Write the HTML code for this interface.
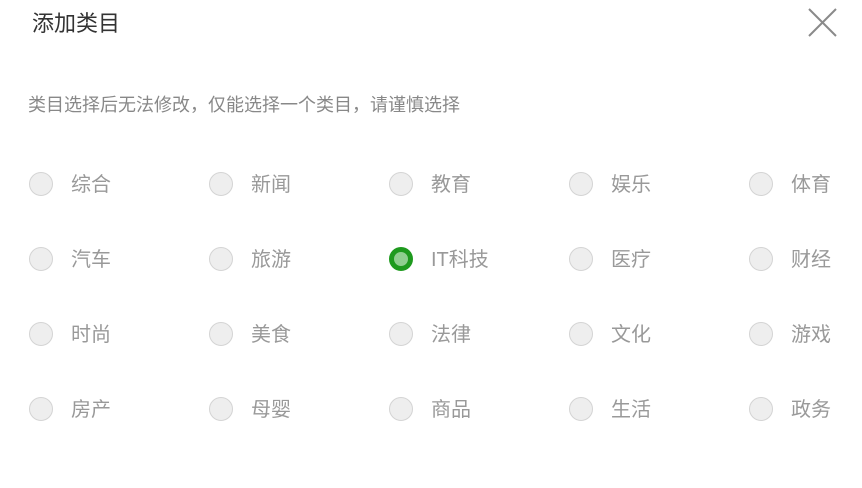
<!DOCTYPE html>
<html><head><meta charset="utf-8"><style>
body{margin:0;width:862px;height:488px;background:#fff;position:relative;overflow:hidden;font-family:"Liberation Sans","Noto Sans CJK SC",sans-serif}
.t{position:absolute;left:32px;top:10px;font-size:22px;color:#333;line-height:28px}
.s{position:absolute;left:28px;top:93px;font-size:18px;color:#888;line-height:24px}
.r{position:absolute;width:22px;height:22px;border-radius:50%;background:#eee;border:1px solid #d4d4d4}
.r.on{background:#8fce8f;border:5px solid #1e9a1e;width:14px;height:14px}
.l{position:absolute;font-size:20px;color:#999;line-height:26px}
</style></head><body>
<div class="t">添加类目</div>
<svg style="position:absolute;left:805px;top:5px" width="36" height="36"><path d="M4 4L31 31M31 4L4 31" stroke="#8a8a8a" stroke-width="2"/></svg>
<div class="s">类目选择后无法修改，仅能选择一个类目，请谨慎选择</div>
<div id="g"></div>
<script>
var n=[["综合","新闻","教育","娱乐","体育"],["汽车","旅游","IT科技","医疗","财经"],["时尚","美食","法律","文化","游戏"],["房产","母婴","商品","生活","政务"]];
var h="";
n.forEach(function(r,i){r.forEach(function(t,j){var x=40+180*j,y=184+75*i;
h+='<div class="r'+(i==1&&j==2?' on':'')+'" style="left:'+(x-11)+'px;top:'+(y-12)+'px"></div><div class="l" style="left:'+(x+31)+'px;top:'+(y-12)+'px">'+t+'</div>';});});
document.getElementById("g").innerHTML=h;
</script>
</body></html>
